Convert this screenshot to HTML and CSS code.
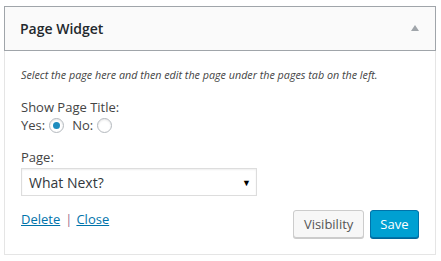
FILE: index.html
```html
<!DOCTYPE html>
<html>
<head>
<meta charset="utf-8">
<link rel="stylesheet" href="styles.css">
</head>
<body>
<div class="widget">
  <div class="widget-top">
    <h3 class="widget-title">Page Widget</h3>
    <span class="toggle"></span>
  </div>
  <div class="widget-inside">
    <p class="description">Select the page here and then edit the page under the pages tab on the left.</p>
    <div class="field">
      <div class="label">Show Page Title:</div>
      <div class="radios">
        <span>Yes:</span><span class="radio checked"></span>
        <span class="no">No:</span><span class="radio"></span>
      </div>
    </div>
    <div class="field page-field">
      <div class="label">Page:</div>
      <div class="select"><span>What Next?</span><span class="arrow">▼</span></div>
    </div>
    <div class="actions">
      <div class="links"><a href="#">Delete</a><span class="sep">|</span><a href="#">Close</a></div>
      <div class="buttons">
        <button class="btn">Visibility</button>
        <button class="btn primary">Save</button>
      </div>
    </div>
  </div>
</div>
</body>
</html>
```

FILE: styles.css
```css
html, body {
  margin: 0;
  padding: 0;
  background: #fff;
}
body {
  font-family: "Open Sans", "Liberation Sans", sans-serif;
  color: #444;
  font-size: 13px;
  padding: 6px 0 0 4px;
}
.widget {
  width: 432px;
}
.widget-top {
  height: 43px;
  border: 1px solid #a0a5aa;
  background: #fafafa;
  display: flex;
  align-items: center;
  justify-content: space-between;
  padding: 0 15px;
}
.widget-title {
  margin: 0;
  font-size: 14px;
  font-weight: 600;
  color: #23282d;
  line-height: 1.4;
}
.toggle {
  width: 0;
  height: 0;
  border-left: 4px solid transparent;
  border-right: 4px solid transparent;
  border-bottom: 6px solid #a0a5aa;
  margin-right: 1px;
  margin-top: -1px;
}
.widget-inside {
  border: 1px solid #e5e5e5;
  border-top: none;
  padding: 16px 16px 14px 16px;
  height: 173px;
}
.description {
  margin: 0;
  font-size: 10.75px;
  font-style: italic;
  color: #444;
  line-height: 16px;
}
.field {
  margin-top: 15px;
}
.label {
  line-height: 18px;
}
.radios {
  display: flex;
  align-items: center;
  height: 18px;
}
.radio {
  width: 15px;
  height: 15px;
  border: 1px solid #b4b9be;
  border-radius: 50%;
  box-sizing: border-box;
  margin-left: 4px;
  box-shadow: inset 0 1px 2px rgba(0,0,0,.1);
  display: inline-flex;
  align-items: center;
  justify-content: center;
}
.radio.checked::after {
  content: "";
  width: 7px;
  height: 7px;
  border-radius: 50%;
  background: #1e8cbe;
}
.no {
  margin-left: 8px;
}
.page-field {
  margin-top: 14px;
}
.select {
  margin-top: 2px;
  width: 236px;
  height: 28px;
  box-sizing: border-box;
  border: 1px solid #ddd;
  box-shadow: inset 0 1px 2px rgba(0,0,0,.07);
  display: flex;
  align-items: center;
  justify-content: space-between;
  padding: 0 5px 0 7px;
  font-size: 14px;
  color: #32373c;
}
.arrow {
  font-size: 9px;
  color: #000;
}
.actions {
  margin-top: 14px;
  display: flex;
  justify-content: space-between;
  align-items: flex-start;
}
.links {
  line-height: 18px;
}
.links a {
  color: #0073aa;
  text-decoration: underline;
}
.sep {
  color: #a06e8c;
  margin: 0 4px 0 5px;
}
.buttons {
  display: flex;
  gap: 6px;
}
.btn {
  font-family: "Open Sans", "Liberation Sans", sans-serif;
  font-size: 13px;
  height: 28px;
  padding: 0 9.5px 2px;
  border-radius: 3px;
  border: 1px solid #ccc;
  background: #f7f7f7;
  color: #555;
  box-shadow: 0 1px 0 #ccc;
  line-height: 26px;
}
.btn.primary {
  background: #00a0d2;
  border-color: #0073aa;
  color: #fff;
  box-shadow: 0 1px 0 #006799;
}
```
